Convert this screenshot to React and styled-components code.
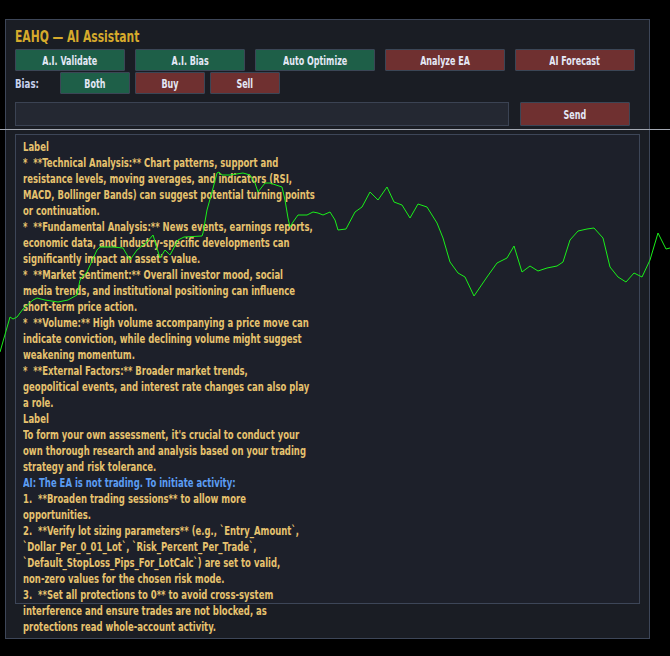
import React from 'react';
import styled, { createGlobalStyle } from 'styled-components';

const FONT = `"Liberation Sans Narrow", "Arial Narrow", "DejaVu Sans Condensed", sans-serif`;

const GlobalStyle = createGlobalStyle`
  html, body {
    margin: 0;
    background: #000;
  }
  * {
    box-sizing: border-box;
  }
`;

const Screen = styled.div`
  position: relative;
  width: 670px;
  height: 656px;
  overflow: hidden;
  background: #000;
  padding: 19px 0 0 5px;
  font-family: ${FONT};
  font-weight: bold;
`;

const Panel = styled.div`
  width: 645px;
  height: 620px;
  background: #1a1d24;
  border: 1px solid #3d4658;
  padding: 0 9px;
  display: flex;
  flex-direction: column;
`;

// the terminal font is far narrower than anything installed, so squeeze it
const Narrow = styled.span`
  display: inline-block;
  white-space: pre;
  transform: scaleX(${({ k }) => k || 0.72});
  transform-origin: ${({ origin }) => origin || 'center'};
`;

const Title = styled.div`
  height: 29px;
  padding-top: 8px;
  font-size: 15.5px;
  line-height: 18px;
  color: #d6aa2c;
`;

const ButtonRow = styled.div`
  display: flex;
  align-items: center;
  gap: ${({ gap }) => gap}px;
  height: 22px;
  margin-bottom: ${({ below }) => below || 0}px;
`;

const Button = styled.div`
  width: ${({ w }) => w}px;
  height: ${({ h }) => h || 22}px;
  background: ${({ tone }) => (tone === 'green' ? '#1e5f48' : '#6f3030')};
  border: 1px solid #3b4656;
  border-radius: 1px;
  color: #e4e8f6;
  font-size: 12.5px;
  display: flex;
  align-items: center;
  justify-content: center;
`;

const BiasLabel = styled.span`
  width: 40px;
  color: #c8d2ee;
  font-size: 13px;
`;

const InputRow = styled.div`
  display: flex;
  gap: 11px;
  margin-top: 8px;
  height: 24px;
`;

const Input = styled.div`
  width: 494px;
  height: 24px;
  background: #242832;
  border: 1px solid #3b4353;
`;

const Divider = styled.div`
  position: absolute;
  left: 0;
  right: 0;
  top: 129px;
  height: 1px;
  background: #a3a8b2;
`;

const Output = styled.div`
  margin-top: 8px;
  width: 625px;
  height: 470px;
  background: #1d202a;
  border: 1px solid #3d4658;
  padding: 4px 7px;
  font-size: 13px;
  line-height: 16px;
  color: #e6c26e;
`;

const Line = styled.div`
  height: 16px;
  white-space: nowrap;
  color: ${({ ai }) => (ai ? '#5b9cf2' : 'inherit')};
`;

const Chart = styled.svg`
  position: absolute;
  left: 0;
  top: 0;
  pointer-events: none;
`;

const lines = [
  'Label',
  '*  **Technical Analysis:** Chart patterns, support and',
  'resistance levels, moving averages, and indicators (RSI,',
  'MACD, Bollinger Bands) can suggest potential turning points',
  'or continuation.',
  '*  **Fundamental Analysis:** News events, earnings reports,',
  'economic data, and industry-specific developments can',
  "significantly impact an asset's value.",
  '*  **Market Sentiment:** Overall investor mood, social',
  'media trends, and institutional positioning can influence',
  'short-term price action.',
  '*  **Volume:** High volume accompanying a price move can',
  'indicate conviction, while declining volume might suggest',
  'weakening momentum.',
  '*  **External Factors:** Broader market trends,',
  'geopolitical events, and interest rate changes can also play',
  'a role.',
  'Label',
  "To form your own assessment, it's crucial to conduct your",
  'own thorough research and analysis based on your trading',
  'strategy and risk tolerance.',
  { ai: true, text: 'AI: The EA is not trading. To initiate activity:' },
  '1.  **Broaden trading sessions** to allow more',
  'opportunities.',
  '2.  **Verify lot sizing parameters** (e.g., `Entry_Amount`,',
  '`Dollar_Per_0_01_Lot`, `Risk_Percent_Per_Trade`,',
  '`Default_StopLoss_Pips_For_LotCalc`) are set to valid,',
  'non-zero values for the chosen risk mode.',
  '3.  **Set all protections to 0** to avoid cross-system',
  'interference and ensure trades are not blocked, as',
  'protections read whole-account activity.',
];

const topButtons = [
  { label: 'A.I. Validate', tone: 'green', w: 110 },
  { label: 'A.I. Bias', tone: 'green', w: 110 },
  { label: 'Auto Optimize', tone: 'green', w: 120 },
  { label: 'Analyze EA', tone: 'red', w: 120 },
  { label: 'AI Forecast', tone: 'red', w: 120 },
];

const biasButtons = [
  { label: 'Both', tone: 'green' },
  { label: 'Buy', tone: 'red' },
  { label: 'Sell', tone: 'red' },
];

const price = [
  [0, 352], [10, 317], [13, 319], [17, 317], [23, 309], [33, 300], [37, 298],
  [45, 300], [58, 302], [68, 300], [77, 295], [80, 280], [87, 272], [97, 250],
  [100, 247], [113, 247], [123, 248], [130, 260], [137, 250], [147, 242],
  [153, 235], [160, 258], [165, 250], [170, 255], [178, 240], [184, 237],
  [202, 236], [203, 233], [207, 210], [212, 192], [217, 173], [219, 172],
  [222, 175], [230, 175], [243, 173], [250, 175], [255, 183], [258, 192],
  [265, 183], [270, 183], [282, 187], [285, 200], [288, 218], [290, 227],
  [293, 222], [298, 215], [307, 215], [313, 212], [318, 213], [323, 215],
  [330, 212], [335, 220], [338, 230], [346, 229], [355, 212], [362, 207],
  [370, 192], [378, 200], [387, 187], [394, 202], [402, 205], [410, 218],
  [418, 204], [427, 207], [437, 223], [443, 238], [450, 262], [458, 273],
  [465, 277], [474, 296], [487, 277], [497, 263], [507, 258], [514, 246],
  [522, 272], [530, 266], [538, 271], [547, 268], [557, 266], [563, 262],
  [570, 240], [578, 231], [587, 229], [594, 228], [603, 238], [610, 267],
  [618, 277], [626, 282], [634, 273], [642, 277], [650, 260], [658, 233],
  [666, 249], [670, 248],
];

export default function App() {
  return (
    <>
      <GlobalStyle />
      <Screen>
        <Panel>
          <Title>
            <Narrow k={0.77} origin="left">EAHQ — AI Assistant</Narrow>
          </Title>
          <ButtonRow gap={10} below={1}>
            {topButtons.map((b) => (
              <Button key={b.label} tone={b.tone} w={b.w}>
                <Narrow k={0.71}>{b.label}</Narrow>
              </Button>
            ))}
          </ButtonRow>
          <ButtonRow gap={5}>
            <BiasLabel>
              <Narrow k={0.74} origin="left">Bias:</Narrow>
            </BiasLabel>
            {biasButtons.map((b) => (
              <Button key={b.label} tone={b.tone} w={70}>
                <Narrow k={0.71}>{b.label}</Narrow>
              </Button>
            ))}
          </ButtonRow>
          <InputRow>
            <Input />
            <Button tone="red" w={110} h={24}>
              <Narrow k={0.71}>Send</Narrow>
            </Button>
          </InputRow>
          <Output>
            {lines.map((l, i) =>
              typeof l === 'string' ? (
                <Line key={i}>
                  <Narrow k={0.725} origin="left">{l}</Narrow>
                </Line>
              ) : (
                <Line key={i} ai>
                  <Narrow k={0.725} origin="left">{l.text}</Narrow>
                </Line>
              )
            )}
          </Output>
        </Panel>
        <Divider />
        <Chart width="670" height="656" viewBox="0 0 670 656">
          <polyline
            points={price.map((p) => p.join(',')).join(' ')}
            fill="none"
            stroke="#1aef1a"
            strokeWidth="1"
          />
        </Chart>
      </Screen>
    </>
  );
}
